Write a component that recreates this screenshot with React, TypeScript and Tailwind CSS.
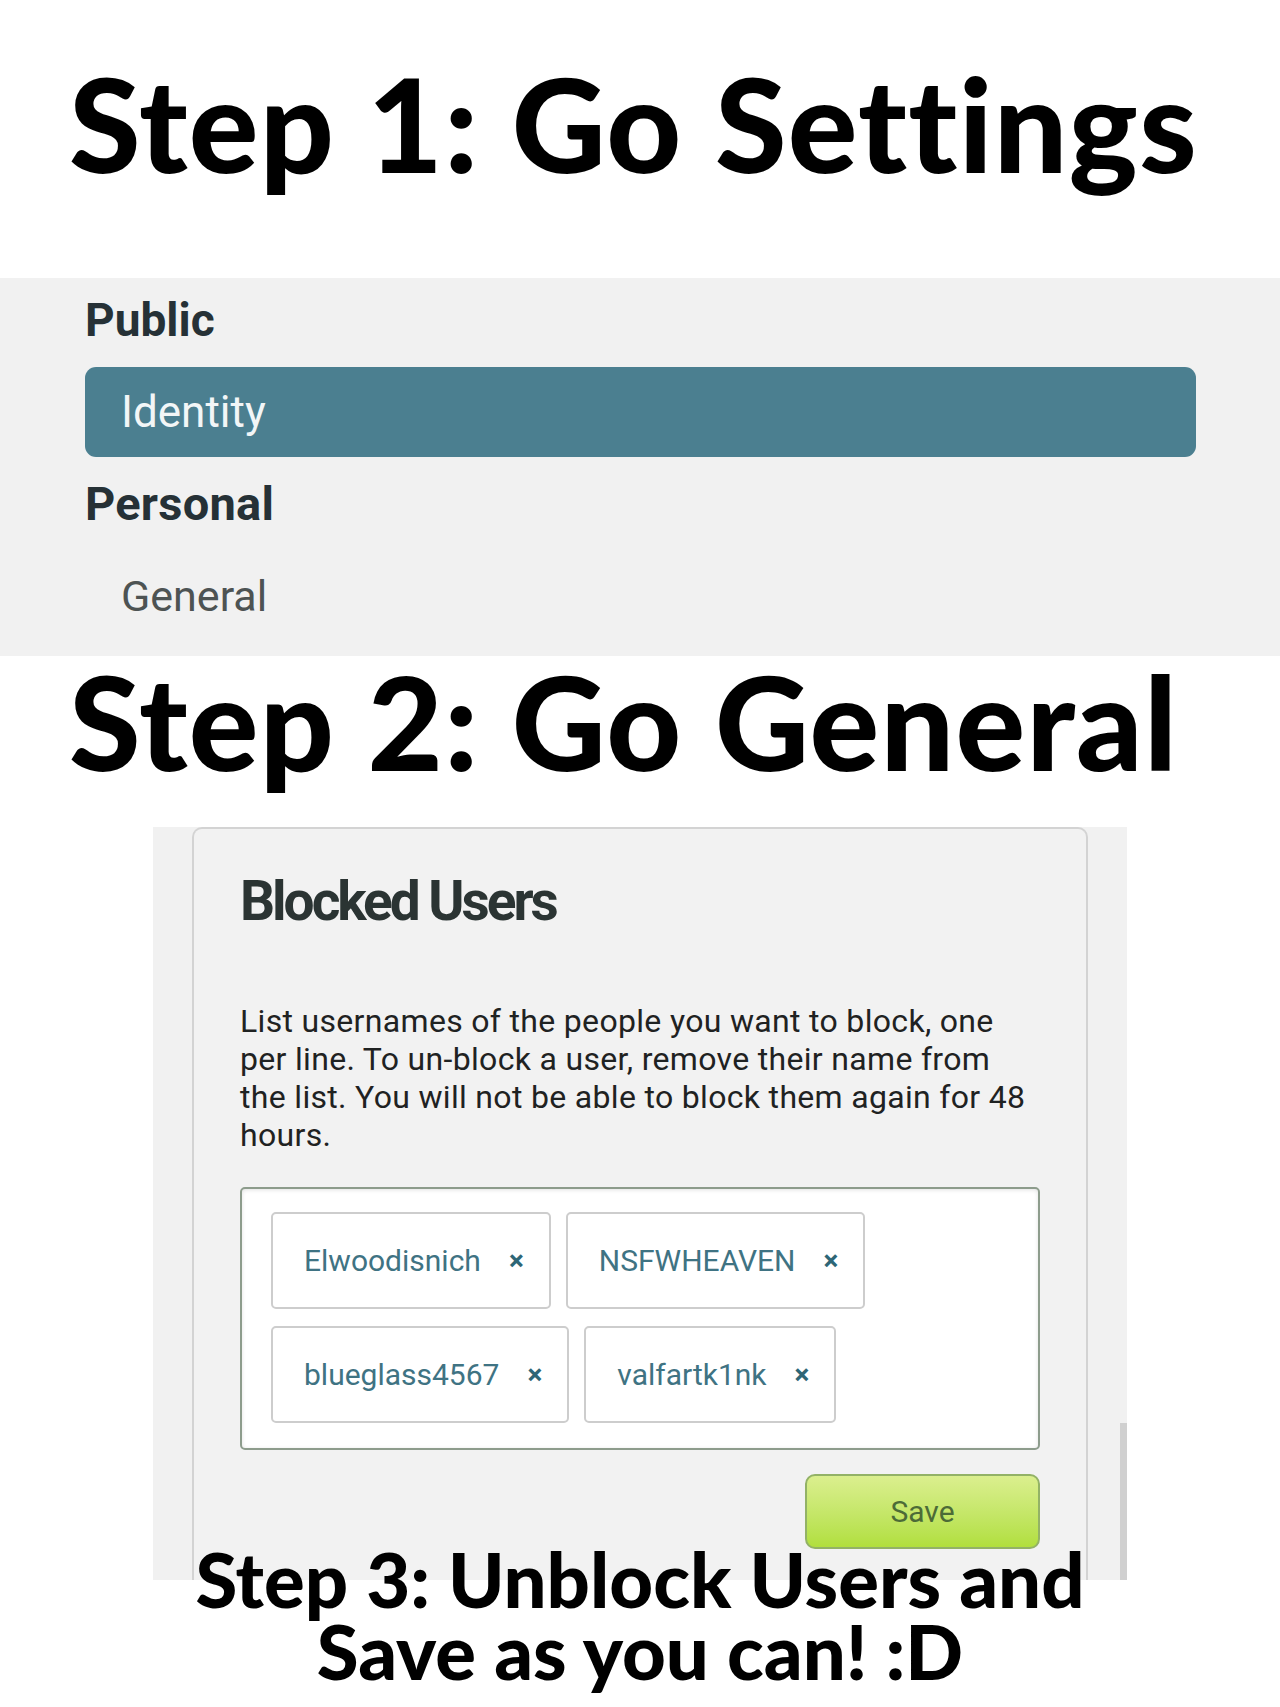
const blocked = ['Elwoodisnich', 'NSFWHEAVEN', 'blueglass4567', 'valfartk1nk']

function Tag({ name }: { name: string }) {
    return (
        <div className="h-[97px] flex items-center gap-[28px] pl-[31px] pr-[25px] bg-white border-2 border-[#cdcdcd] rounded-[5px]">
            <span className="text-[30px] text-[#3f7383]">{name}</span>
            <span className="text-[28px] font-bold leading-none text-[#2e6676]">×</span>
        </div>
    )
}

function StepHeading({ children }: { children: React.ReactNode }) {
    return (
        <h1 className="font-[family-name:Lato,sans-serif] font-black text-[130px] leading-[130px] tracking-[0.01em] text-black whitespace-nowrap">
            {children}
        </h1>
    )
}

export default function App(): JSX.Element {
    return (
        <div className="w-[1280px] bg-white font-[family-name:Roboto,'Noto_Sans',sans-serif]">
            {/* step 1 */}
            <div className="h-[278px] pt-[58px] pl-[69px]">
                <StepHeading>Step 1: Go Settings</StepHeading>
            </div>

            {/* settings nav */}
            <div className="bg-[#f1f1f1] pt-[15px] pb-[15px] pl-[85px] pr-[84px] flex flex-col gap-[20px]">
                <div className="text-[46px] leading-[54px] font-bold text-[#263136]">Public</div>
                <div className="h-[90px] rounded-[11px] bg-[#4b7f90] flex items-center pl-[36px] text-[44px] text-[#f2f6f7]">Identity</div>
                <div className="text-[47px] leading-[54px] font-bold tracking-[0.005em] text-[#263136]">Personal</div>
                <div className="h-[90px] flex items-center pl-[36px] text-[43px] text-[#4d5353]">General</div>
            </div>

            {/* step 2 */}
            <div className="h-[171px] pl-[69px]">
                <StepHeading>Step 2: Go General</StepHeading>
            </div>

            {/* blocked users panel */}
            <div className="ml-[153px] w-[974px] h-[753px] bg-[#f1f1f1] flex overflow-hidden">
                <div className="ml-[39px] w-[896px] h-[820px] shrink-0 border-2 border-b-0 border-[#d3d3d3] rounded-t-[10px] bg-[#f2f2f2] pt-[39px] px-[46px]">
                    <h2 className="text-[55px] leading-[66px] font-bold tracking-[-0.055em] text-[#2b3433]">Blocked Users</h2>
                    <p className="mt-[68px] text-[32px] leading-[38px] tracking-[0.01em] text-[#1f2222] whitespace-nowrap">
                        List usernames of the people you want to block, one<br />
                        per line. To un-block a user, remove their name from<br />
                        the list. You will not be able to block them again for 48<br />
                        hours.
                    </p>
                    <div className="mt-[33px] h-[263px] bg-white border-2 border-[#8d9c8c] rounded-[5px] shadow-[inset_0_1px_4px_rgba(0,0,0,0.12)] pl-[29px] pr-[20px] pt-[23px] flex flex-wrap content-start gap-x-[15px] gap-y-[17px]">
                        {blocked.map((name) => <Tag key={name} name={name} />)}
                    </div>
                    <div className="mt-[24px] flex justify-end">
                        <button className="w-[235px] h-[75px] rounded-[10px] border-2 border-[#93b266] bg-linear-to-b from-[#dbef8e] to-[#b1df3c] text-[30px] text-[#4c6b37]">
                            Save
                        </button>
                    </div>
                </div>
                <div className="ml-[32px] mt-[596px] w-[7px] h-[200px] shrink-0 bg-[#d0d0d0]" />
            </div>

            {/* step 3 */}
            <div className="relative -mt-[37px] pb-[20px] font-[family-name:Lato,sans-serif] font-black text-[76px] leading-[72px] text-black text-center whitespace-nowrap">
                Step 3: Unblock Users and<br />
                Save as you can! :D
            </div>
        </div>
    )
}
